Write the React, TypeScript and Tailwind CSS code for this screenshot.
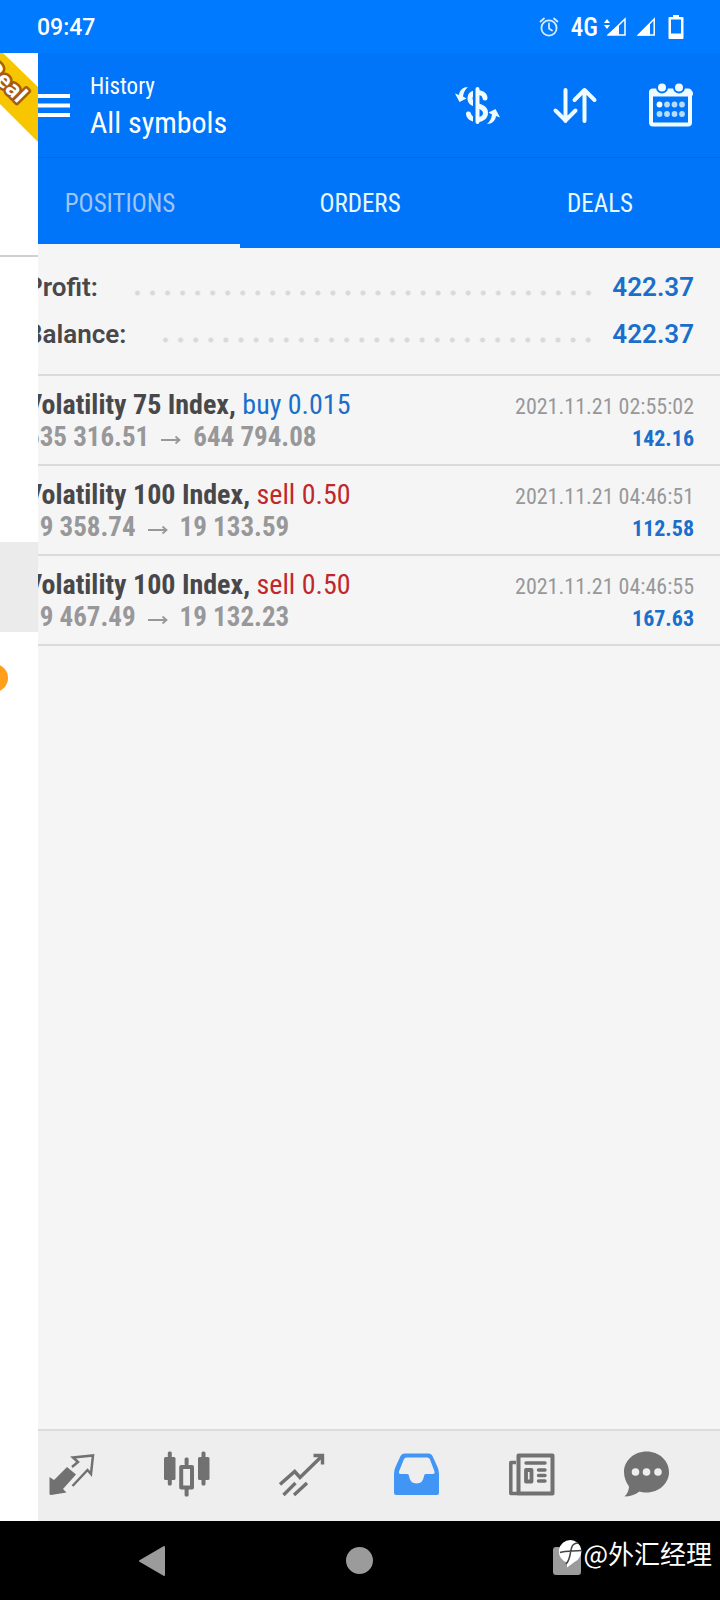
import type { ReactNode } from "react";

interface Deal {
  symbol: string;
  side: "buy" | "sell";
  volume: string;
  open: string;
  close: string;
  time: string;
  profit: string;
}

const deals: Deal[] = [
  { symbol: "Volatility 75 Index", side: "buy", volume: "0.015", open: "635 316.51", close: "644 794.08", time: "2021.11.21 02:55:02", profit: "142.16" },
  { symbol: "Volatility 100 Index", side: "sell", volume: "0.50", open: "19 358.74", close: "19 133.59", time: "2021.11.21 04:46:51", profit: "112.58" },
  { symbol: "Volatility 100 Index", side: "sell", volume: "0.50", open: "19 467.49", close: "19 132.23", time: "2021.11.21 04:46:55", profit: "167.63" },
];

const summary = [
  { label: "Profit:", value: "422.37" },
  { label: "Balance:", value: "422.37" },
];

const tabs = ["POSITIONS", "ORDERS", "DEALS"];

const StatusBar = () => (
  <div className="flex h-[53px] items-center justify-between bg-[#007aff] pl-[37px] pr-9 text-white">
    <span className="pt-1 font-[Roboto,sans-serif] text-[23px] font-medium">09:47</span>
    <div className="flex items-center">
      <svg width="20" height="20" viewBox="0 0 20 20" fill="none" stroke="#d5ecff" strokeWidth="1.8" strokeLinecap="round">
        <circle cx="10" cy="11" r="7.6" />
        <path d="M10 6.5v5l3 2M1.5 4.5 5 1.5M18.5 4.5 15 1.5" />
      </svg>
      <span className="ml-3 pt-0.5 text-[25px] font-medium">4G</span>
      <svg className="ml-1.5" width="22" height="20" viewBox="0 0 22 20">
        <path d="M3 2 6 6H0ZM3 12 6 8H0Z" fill="#fff" />
        <path d="M21 2V18H4.5Z" fill="none" stroke="#fff" strokeWidth="1.5" />
        <path d="M15 8V18H3Z" fill="#fff" />
      </svg>
      <svg className="ml-2.5" width="20" height="20" viewBox="0 0 20 20">
        <path d="M18.2 2V18H2.5Z" fill="none" stroke="#fff" strokeWidth="1.5" />
        <path d="M14 6V18.5H1Z" fill="#fff" />
      </svg>
      <svg className="ml-3" width="16" height="26" viewBox="0 0 16 26" fill="#fff">
        <path d="M5 1h6v2H5z" />
        <path fillRule="evenodd" d="M1.5 3h13a1 1 0 0 1 1 1v20a1 1 0 0 1-1 1h-13a1 1 0 0 1-1-1V4a1 1 0 0 1 1-1ZM3 5.5V19.5H13V5.5Z" />
      </svg>
    </div>
  </div>
);

const HeaderButton = ({ label, children }: { label: string; children: ReactNode }) => (
  <button type="button" aria-label={label} className="flex w-[97px] items-center justify-center">
    <svg width="46" height="46" viewBox="0 0 46 46" fill="none" stroke="#effbff" strokeLinecap="round" strokeLinejoin="round">
      {children}
    </svg>
  </button>
);

const swapArrow = "M13 5C8 5 4.5 8.5 4 13L0 11.5 4.5 20 11.5 16.5 8 14.5C8.5 10.5 10 7.5 13 5Z";

const Header = () => (
  <header className="flex h-[105px] items-stretch border-b border-[#006ae8] bg-[#0075f9] text-white">
    <button type="button" aria-label="Menu" className="flex w-[90px] items-center pt-0.5 pl-6">
      <svg width="46" height="24" viewBox="0 0 46 24" fill="#fff">
        <path d="M0 0h46v4H0zM0 9.5h46v4H0zM0 19h46v4H0z" />
      </svg>
    </button>
    <div className="flex flex-1 flex-col justify-center pt-0.5">
      <p className="text-[23px] leading-[33px]">History</p>
      <h1 className="text-[30px] leading-10">All symbols</h1>
    </div>
    <HeaderButton label="Currency">
      <path d="M30 16C29.5 9 15 8 15 16.5C15 25 30.5 22 30.5 31C30.5 39.500 15 40 13.5 32" strokeWidth="5" />
      <path d="M20 6V42" stroke="#0075f9" strokeWidth="4" strokeLinecap="butt" />
      <path d="M22.5 7V40" strokeWidth="4" />
      <path d={swapArrow} fill="#effbff" stroke="none" />
      <path d={swapArrow} fill="#effbff" stroke="none" transform="rotate(180 22.5 23.5)" />
    </HeaderButton>
    <HeaderButton label="Sort">
      <path d="M13.5 8V39M3.5 28.5 13.5 38.5 23.5 28.5M32.5 39V8M22.5 18 32.5 8 42.5 18" strokeWidth="4" />
    </HeaderButton>
    <HeaderButton label="Period">
      <rect x="2" y="8.5" width="39" height="34" rx="2" strokeWidth="4" />
      <path d="M2 11.5H41" strokeWidth="6" />
      <circle cx="13" cy="5.5" r="5" fill="#effbff" stroke="#0075f9" strokeWidth="2" />
      <circle cx="30" cy="5.5" r="5" fill="#effbff" stroke="#0075f9" strokeWidth="2" />
      <g stroke="none" fill="#b4dcff">
        <circle cx="10.5" cy="22.5" r="2.9" fill="#fff" />
        <circle cx="18" cy="22.5" r="2.9" />
        <circle cx="25.5" cy="22.5" r="2.9" />
        <circle cx="33" cy="22.5" r="2.9" />
        <circle cx="10.5" cy="32" r="2.9" />
        <circle cx="18" cy="32" r="2.9" />
        <circle cx="25.5" cy="32" r="2.9" />
        <circle cx="33" cy="32" r="2.9" />
      </g>
    </HeaderButton>
  </header>
);

const Tabs = () => (
  <div role="tablist" className="grid h-[90px] grid-cols-3 bg-[#0075f9] text-[25px]">
    {tabs.map((tab, i) => (
      <button
        key={tab}
        type="button"
        role="tab"
        aria-selected={i === 0}
        className={`border-b-4 pt-1.5 ${
          i === 0 ? "border-[#f5f5f5] text-[#a0c4f5]" : "border-transparent text-[#e8f8ff]"
        }`}
      >
        {tab}
      </button>
    ))}
  </div>
);

const Summary = () => (
  <dl className="border-b-2 border-[#dbdbdb] px-[26px] py-4 font-[Roboto,sans-serif] text-[26px] font-semibold">
    {summary.map(({ label, value }) => (
      <div key={label} className="flex h-[47px] items-center">
        <dt className="text-[#48484b]">{label}</dt>
        <div className="mt-2.5 mr-4 ml-8 h-1.5 flex-1 bg-[radial-gradient(circle,#d9d9d9_2px,transparent_3px)] bg-[length:15px_6px] bg-repeat-round" />
        <dd className="text-[#1a6fcb]">{value}</dd>
      </div>
    ))}
  </dl>
);

const DealRow = ({ deal }: { deal: Deal }) => (
  <li className="flex justify-between border-b-2 border-[#dbdbdb] px-[26px] pt-[13px] pb-[9px] leading-8">
    <div>
      <p className="text-[28px] leading-8 font-bold text-[#48484b]">
        {deal.symbol},{" "}
        <span className={`font-normal ${deal.side === "buy" ? "text-[#1a6fcb]" : "text-[#c0272d]"}`}>
          {deal.side} {deal.volume}
        </span>
      </p>
      <p className="flex items-center text-[27px] leading-8 font-bold text-[#98989a]">
        {deal.open}
        <svg className="mx-3 mt-1.5" width="20" height="12" viewBox="0 0 20 12" fill="none" stroke="currentColor" strokeWidth="1.8">
          <path d="M0 6H18M14.5 2.5 18.500 6 14.5 9.5" />
        </svg>
        {deal.close}
      </p>
    </div>
    <div className="pt-0.5 text-right text-[22px] leading-8">
      <p className="text-[#98989a]">{deal.time}</p>
      <p className="font-bold text-[#1a6fcb]">{deal.profit}</p>
    </div>
  </li>
);

// edge of the account drawer that still covers the left side of the page
const Drawer = () => (
  <aside className="absolute inset-y-0 left-0 w-[38px] overflow-hidden bg-white">
    <div className="h-[204px] border-b-2 border-[#cfcfcf]">
      <svg width="38" height="92" viewBox="0 0 38 92">
        <path d="M3 0 38 34V89L0 51V0Z" fill="#f7c600" />
        <text
          transform="translate(18 51) rotate(45)"
          textAnchor="end"
          className="fill-white stroke-[#a85a10] stroke-[5px] font-['Noto_Sans',sans-serif] text-[22px] font-bold [paint-order:stroke] [stroke-linejoin:round]"
        >
          Real
        </text>
      </svg>
    </div>
    <div className="mt-[285px] h-[90px] bg-[#ebebeb]" />
    <div className="mt-8 -ml-5 size-7 rounded-full bg-[#ff9f1a]" />
  </aside>
);

const NavButton = ({ label, active, children }: { label: string; active?: boolean; children: ReactNode }) => (
  <button type="button" aria-label={label} className={`flex items-center justify-center ${active ? "text-[#4196f5]" : "text-[#717171]"}`}>
    <svg width="46" height="46" viewBox="0 0 46 46" fill="none" stroke="currentColor">
      {children}
    </svg>
  </button>
);

const BottomNav = () => (
  <nav className="grid h-[92px] grid-cols-6 border-t-2 border-[#dbdddb] bg-[#eeeeee] pr-4 pb-1 pl-3.5">
    <NavButton label="Quotes">
      <path d="M0.5 26 5 29 18 16 27 23.5 14 38 17.5 41.5 2 44 0.5 43.5Z" fill="currentColor" stroke="none" />
      <path d="M23 16 29 11 24 6.5 44 4.5 42 23 38.5 19 23.5 35" strokeWidth="2.5" />
    </NavButton>
    <NavButton label="Charts">
      <g fill="currentColor" stroke="none">
        <rect x="0" y="6" width="11.5" height="23" rx="1.5" />
        <rect x="3.8" y="0.5" width="4" height="34" rx="1.5" />
        <rect x="34" y="6" width="11.5" height="23" rx="1.5" />
        <rect x="37.5" y="0.5" width="4" height="34" rx="1.5" />
        <rect x="20.6" y="6.5" width="4" height="8" rx="1.5" />
        <rect x="20.6" y="37" width="4" height="8.5" rx="1.5" />
      </g>
      <rect x="17.2" y="16" width="10.8" height="20.5" strokeWidth="4" strokeLinejoin="round" />
    </NavButton>
    <NavButton label="Trade">
      <path d="M1 33.5 15.7 20.5 21 26.5 43 5M34.5 4.5H43.500V13.5M4.5 44 16.5 32M15 44 28 32" strokeWidth="3.4" />
    </NavButton>
    <NavButton label="History" active>
      <path
        fill="currentColor"
        stroke="none"
        fillRule="evenodd"
        d="M10.5 2.5H35Q37.5 2.5 38.5 5L43.5 16Q45 19 45 23V41.5Q45 44 42.5 44H2.5Q0 44 0 41.500V23Q0 19 1.5 16L6.5 5Q7.5 2.5 10.5 2.5ZM12.5 6.5Q10.5 6.5 9.8 8.5L5 20.5Q4.5 23 6.5 23H13Q15 23 15 25Q16 32.5 22.5 32.5T30 25Q30 23 32 23H39Q41 23 40.5 20.5L36 8.5Q35.2 6.5 33 6.5Z"
      />
    </NavButton>
    <NavButton label="News">
      <rect x="9.5" y="4.5" width="34" height="38" strokeWidth="4" strokeLinejoin="round" />
      <path d="M7 11.5H1.8V42.5H9" strokeWidth="3.5" strokeLinejoin="round" />
      <rect x="17" y="19" width="5.5" height="11.5" strokeWidth="3.8" strokeLinejoin="round" />
      <path d="M17 12H36M29.5 19H36M29.5 24.5H36M29.5 30H36" strokeWidth="3.4" strokeLinecap="round" />
    </NavButton>
    <NavButton label="Messages">
      <path
        fill="currentColor"
        stroke="none"
        d="M22.5 0.500C35 0.500 45 9.5 45 21S35 41.5 22.5 41.5C20 41.5 17.5 41.2 15.5 40.5C11 44 6 45.5 0.5 45.5C3.5 42.5 5 39 5 35.5C2 31.5 0 26.500 0 21C0 9.5 10 0.5 22.5 0.5Z"
      />
      <g fill="#eeeeee" stroke="none">
        <circle cx="11.5" cy="21" r="3.8" />
        <circle cx="22.5" cy="21" r="3.8" />
        <circle cx="34" cy="21" r="3.8" />
      </g>
    </NavButton>
  </nav>
);

const SystemNav = () => (
  <div className="relative grid h-[79px] grid-cols-3 items-center bg-black px-[49px]">
    <button type="button" aria-label="Back" className="flex justify-center">
      <svg width="30" height="32" viewBox="0 0 30 32">
        <path d="M26 2V30L2 16Z" fill="#9b9b9b" stroke="#9b9b9b" strokeWidth="2" strokeLinejoin="round" />
      </svg>
    </button>
    <button type="button" aria-label="Home" className="flex justify-center">
      <span className="size-[27px] rounded-full bg-[#9b9b9b]" />
    </button>
    <button type="button" aria-label="Recent apps" className="flex justify-center">
      <span className="size-7 rounded-[3px] bg-[#9b9b9b]" />
    </button>
    <div className="absolute top-3.5 right-2 flex items-center text-white">
      <svg width="25" height="30" viewBox="0 0 25 30">
        <path d="M12.5 2a11.500 11.500 0 0 1 4 22L9 29.500 9 24.500A11.500 11.500 0 0 1 12.500 2Z" fill="#fff" />
        <path d="M20 5C13 5 13 12 12 17S10 24 8 26M2 14.500C8 12 16 13.500 23 12.500" fill="none" stroke="#444" strokeWidth="1.5" />
      </svg>
      <span className="font-['Noto_Sans_CJK_SC',sans-serif] text-[26px] leading-9">@外汇经理</span>
    </div>
  </div>
);

export default function App() {
  return (
    <div className="flex min-h-screen flex-col overflow-hidden bg-[#f5f5f5] font-['Roboto_Condensed',Roboto,sans-serif]">
      <StatusBar />
      <div className="relative flex flex-1 flex-col">
        <Header />
        <Tabs />
        <main className="flex-1">
          <Summary />
          <ul>
            {deals.map((deal) => (
              <DealRow key={deal.time} deal={deal} />
            ))}
          </ul>
        </main>
        <BottomNav />
        <Drawer />
      </div>
      <SystemNav />
    </div>
  );
}
